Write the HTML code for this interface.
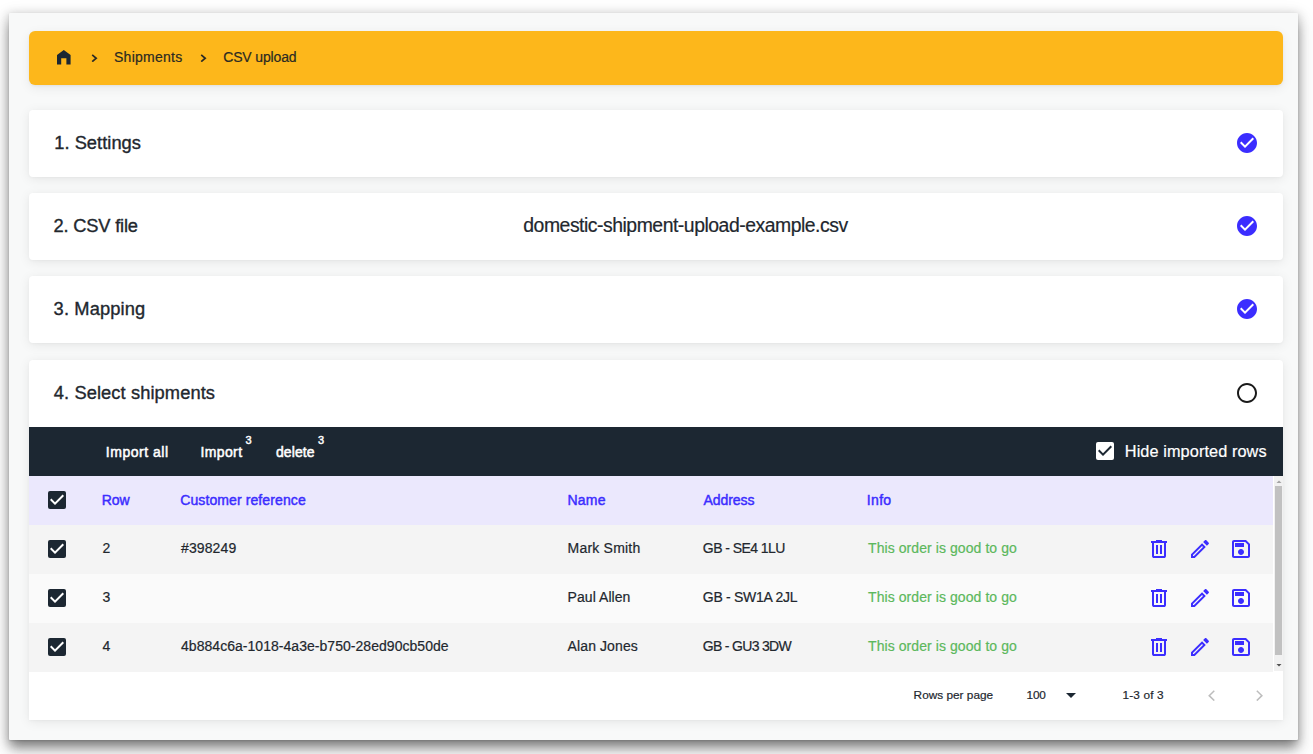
<!DOCTYPE html>
<html><head><meta charset="utf-8"><style>
html,body{margin:0;padding:0;background:#fff;width:1313px;height:754px;overflow:hidden;position:relative;font-family:"Liberation Sans",sans-serif}
.t{position:absolute;white-space:nowrap}
svg{display:block}
</style></head><body>
<div style="position:absolute;left:9px;top:13px;width:1289.3px;height:726.5px;background:#f8f9f9;border-radius:1px;box-shadow:0 1px 2px rgba(0,0,0,.12),0 2px 10px 2px rgba(0,0,0,.15),0 10px 11px -2px rgba(0,0,0,.35),0 8px 20px 3px rgba(0,0,0,.12)"></div>
<div style="position:absolute;left:29px;top:31px;width:1254px;height:53.5px;background:#fdb71b;border-radius:6px;box-shadow:0 1px 3px rgba(0,0,0,.05),0 3px 12px rgba(0,0,0,.07)"></div>
<svg style="position:absolute;left:57px;top:50.3px" width="13.6" height="14.5" viewBox="0 0 13.6 14.5"><path d="M0 14.5V4.9L6.8 0L13.6 4.9V14.5H9.4V8.2H4.2V14.5Z" fill="#1c2732"/></svg>
<svg style="position:absolute;left:90.8px;top:53.5px" width="7" height="8.5" viewBox="0 0 7 8.5"><path d="M1.2 0.9L5.2 4.25L1.2 7.6" fill="none" stroke="#2a2a25" stroke-width="1.7"/></svg>
<svg style="position:absolute;left:199.6px;top:53.5px" width="7" height="8.5" viewBox="0 0 7 8.5"><path d="M1.2 0.9L5.2 4.25L1.2 7.6" fill="none" stroke="#2a2a25" stroke-width="1.7"/></svg>
<div class="t" style="left:114.00px;top:50.05px;font-size:14px;line-height:14px;color:#2b2a22;font-weight:400;letter-spacing:0.257px;-webkit-text-stroke:0.2px #2b2a22;">Shipments</div>
<div class="t" style="left:223.20px;top:50.05px;font-size:14px;line-height:14px;color:#2b2a22;font-weight:400;letter-spacing:-0.141px;-webkit-text-stroke:0.2px #2b2a22;">CSV upload</div>
<div style="position:absolute;left:29px;top:109.5px;width:1254px;height:67px;background:#fff;border-radius:4px;box-shadow:0 1px 3px rgba(0,0,0,.03),0 2px 12px rgba(0,0,0,.08)"></div>
<div style="position:absolute;left:29px;top:192.8px;width:1254px;height:66.8px;background:#fff;border-radius:4px;box-shadow:0 1px 3px rgba(0,0,0,.03),0 2px 12px rgba(0,0,0,.08)"></div>
<div style="position:absolute;left:29px;top:276.3px;width:1254px;height:66.9px;background:#fff;border-radius:4px;box-shadow:0 1px 3px rgba(0,0,0,.03),0 2px 12px rgba(0,0,0,.08)"></div>
<div style="position:absolute;left:29px;top:360px;width:1254px;height:360px;background:#fff;border-radius:4px 4px 0 0;box-shadow:0 1px 3px rgba(0,0,0,.03),0 2px 12px rgba(0,0,0,.08)"></div>
<div class="t" style="left:54.20px;top:133.51px;font-size:18.3px;line-height:18.3px;color:#22272e;font-weight:400;letter-spacing:0.040px;-webkit-text-stroke:0.35px #22272e">1. Settings</div>
<div class="t" style="left:53.60px;top:216.81px;font-size:18.3px;line-height:18.3px;color:#22272e;font-weight:400;letter-spacing:-0.200px;-webkit-text-stroke:0.35px #22272e">2. CSV file</div>
<div class="t" style="left:53.60px;top:299.81px;font-size:18.3px;line-height:18.3px;color:#22272e;font-weight:400;letter-spacing:0.131px;-webkit-text-stroke:0.35px #22272e">3. Mapping</div>
<div class="t" style="left:53.80px;top:383.51px;font-size:18.3px;line-height:18.3px;color:#22272e;font-weight:400;letter-spacing:0.092px;-webkit-text-stroke:0.35px #22272e">4. Select shipments</div>
<div class="t" style="left:523.30px;top:215.97px;font-size:19.4px;line-height:19.4px;color:#22272e;font-weight:400;letter-spacing:-0.480px;-webkit-text-stroke:0.2px #22272e;">domestic-shipment-upload-example.csv</div>
<svg style="position:absolute;left:1235px;top:130.5px" width="24" height="24" viewBox="0 0 24 24"><path d="M12 2C6.48 2 2 6.48 2 12s4.48 10 10 10 10-4.48 10-10S17.52 2 12 2zm-2 15l-5-5 1.41-1.41L10 14.17l7.59-7.59L19 8l-9 9z" fill="#3b2dff"/></svg>
<svg style="position:absolute;left:1235px;top:213.7px" width="24" height="24" viewBox="0 0 24 24"><path d="M12 2C6.48 2 2 6.48 2 12s4.48 10 10 10 10-4.48 10-10S17.52 2 12 2zm-2 15l-5-5 1.41-1.41L10 14.17l7.59-7.59L19 8l-9 9z" fill="#3b2dff"/></svg>
<svg style="position:absolute;left:1235px;top:297.3px" width="24" height="24" viewBox="0 0 24 24"><path d="M12 2C6.48 2 2 6.48 2 12s4.48 10 10 10 10-4.48 10-10S17.52 2 12 2zm-2 15l-5-5 1.41-1.41L10 14.17l7.59-7.59L19 8l-9 9z" fill="#3b2dff"/></svg>
<svg style="position:absolute;left:1235px;top:380.5px" width="24" height="24" viewBox="0 0 24 24"><path d="M12 2C6.48 2 2 6.48 2 12s4.48 10 10 10 10-4.48 10-10S17.52 2 12 2zm0 18c-4.42 0-8-3.58-8-8s3.58-8 8-8 8 3.58 8 8-3.58 8-8 8z" fill="#1a1a1a"/></svg>
<div style="position:absolute;left:29px;top:426.7px;width:1254px;height:49px;background:#1c2732"></div>
<div class="t" style="left:105.80px;top:445.05px;font-size:14px;line-height:14px;color:#fff;font-weight:400;letter-spacing:0.525px;-webkit-text-stroke:0.5px #fff">Import all</div>
<div class="t" style="left:200.40px;top:445.05px;font-size:14px;line-height:14px;color:#fff;font-weight:400;letter-spacing:0.400px;-webkit-text-stroke:0.5px #fff">Import</div>
<div class="t" style="left:245.60px;top:434.61px;font-size:10.5px;line-height:10.5px;color:#fff;font-weight:400;-webkit-text-stroke:0.45px #fff;font-size:11px">3</div>
<div class="t" style="left:276.00px;top:445.05px;font-size:14px;line-height:14px;color:#fff;font-weight:400;letter-spacing:0.080px;-webkit-text-stroke:0.5px #fff">delete</div>
<div class="t" style="left:317.90px;top:434.61px;font-size:10.5px;line-height:10.5px;color:#fff;font-weight:400;-webkit-text-stroke:0.45px #fff;font-size:11px">3</div>
<svg style="position:absolute;left:1092.5px;top:439.3px" width="24" height="24" viewBox="0 0 24 24"><rect x="3" y="3" width="18" height="18" rx="2" fill="#fff"/><path d="M10 17l-5-5 1.41-1.41L10 14.17l7.59-7.59L19 8l-9 9z" fill="#1c2732"/></svg>
<div class="t" style="left:1124.80px;top:443.30px;font-size:16.3px;line-height:16.3px;color:#fff;font-weight:400;letter-spacing:0.091px;-webkit-text-stroke:0.2px #fff;">Hide imported rows</div>
<div style="position:absolute;left:29px;top:475.7px;width:1244px;height:49px;background:#ebe8fd"></div>
<svg style="position:absolute;left:45.3px;top:488px" width="24" height="24" viewBox="0 0 24 24"><rect x="3" y="3" width="18" height="18" rx="2" fill="#1c2732"/><path d="M10 17l-5-5 1.41-1.41L10 14.17l7.59-7.59L19 8l-9 9z" fill="#fff"/></svg>
<div class="t" style="left:101.80px;top:492.55px;font-size:14px;line-height:14px;color:#3b2dff;font-weight:400;letter-spacing:-0.150px;-webkit-text-stroke:0.45px #3b2dff">Row</div>
<div class="t" style="left:180.20px;top:492.55px;font-size:14px;line-height:14px;color:#3b2dff;font-weight:400;letter-spacing:0.104px;-webkit-text-stroke:0.45px #3b2dff">Customer reference</div>
<div class="t" style="left:567.60px;top:492.55px;font-size:14px;line-height:14px;color:#3b2dff;font-weight:400;letter-spacing:0.168px;-webkit-text-stroke:0.45px #3b2dff">Name</div>
<div class="t" style="left:703.40px;top:492.55px;font-size:14px;line-height:14px;color:#3b2dff;font-weight:400;letter-spacing:-0.031px;-webkit-text-stroke:0.45px #3b2dff">Address</div>
<div class="t" style="left:866.80px;top:492.55px;font-size:14px;line-height:14px;color:#3b2dff;font-weight:400;letter-spacing:0.333px;-webkit-text-stroke:0.45px #3b2dff">Info</div>
<div style="position:absolute;left:29px;top:524.7px;width:1244px;height:49px;background:#f4f4f4"></div>
<svg style="position:absolute;left:45.3px;top:537.0px" width="24" height="24" viewBox="0 0 24 24"><rect x="3" y="3" width="18" height="18" rx="2" fill="#1c2732"/><path d="M10 17l-5-5 1.41-1.41L10 14.17l7.59-7.59L19 8l-9 9z" fill="#fff"/></svg>
<div class="t" style="left:102.60px;top:541.05px;font-size:14px;line-height:14px;color:#22272e;font-weight:400;-webkit-text-stroke:0.2px #22272e;">2</div>
<div class="t" style="left:181.00px;top:541.05px;font-size:14px;line-height:14px;color:#22272e;font-weight:400;letter-spacing:0.118px;-webkit-text-stroke:0.2px #22272e;">#398249</div>
<div class="t" style="left:567.60px;top:541.05px;font-size:14px;line-height:14px;color:#22272e;font-weight:400;letter-spacing:0.202px;-webkit-text-stroke:0.2px #22272e;">Mark Smith</div>
<div class="t" style="left:702.80px;top:541.05px;font-size:14px;line-height:14px;color:#22272e;font-weight:400;letter-spacing:-0.554px;-webkit-text-stroke:0.2px #22272e;">GB - SE4 1LU</div>
<div class="t" style="left:868.00px;top:541.05px;font-size:14px;line-height:14px;color:#5cb85c;font-weight:400;letter-spacing:0.077px;-webkit-text-stroke:0.2px #5cb85c;">This order is good to go</div>
<svg style="position:absolute;left:1147px;top:536.9000000000001px" width="24" height="24" viewBox="0 -960 960 960"><path d="M280-120q-33 0-56.5-23.5T200-200v-520h-40v-80h200v-40h240v40h200v80h-40v520q0 33-23.5 56.5T680-120H280Zm400-600H280v520h400v-520ZM360-280h80v-360h-80v360Zm160 0h80v-360h-80v360Z" fill="#3b2dff"/></svg>
<svg style="position:absolute;left:1188px;top:536.9000000000001px" width="24" height="24" viewBox="0 0 24 24"><path d="M3 17.25V21h3.75L17.81 9.94l-3.75-3.75L3 17.25zM5.92 19H5v-.92l9.06-9.06.92.92L5.92 19zM20.71 5.63l-2.34-2.34c-.2-.2-.45-.29-.71-.29s-.51.1-.7.29l-1.83 1.83 3.75 3.75 1.83-1.83c.39-.39.39-1.02 0-1.41z" fill="#3b2dff"/></svg>
<svg style="position:absolute;left:1229px;top:536.9000000000001px" width="24" height="24" viewBox="0 0 24 24"><path d="M17 3H5c-1.11 0-2 .9-2 2v14c0 1.1.89 2 2 2h14c1.1 0 2-.9 2-2V7l-4-4zm2 16H5V5h11.17L19 7.83V19zm-7-7c-1.66 0-3 1.34-3 3s1.34 3 3 3 3-1.34 3-3-1.34-3-3-3zM6 6h9v4H6z" fill="#3b2dff"/></svg>
<div style="position:absolute;left:29px;top:573.7px;width:1244px;height:49px;background:#fafafa"></div>
<svg style="position:absolute;left:45.3px;top:586.0px" width="24" height="24" viewBox="0 0 24 24"><rect x="3" y="3" width="18" height="18" rx="2" fill="#1c2732"/><path d="M10 17l-5-5 1.41-1.41L10 14.17l7.59-7.59L19 8l-9 9z" fill="#fff"/></svg>
<div class="t" style="left:102.60px;top:590.05px;font-size:14px;line-height:14px;color:#22272e;font-weight:400;-webkit-text-stroke:0.2px #22272e;">3</div>
<div class="t" style="left:567.60px;top:590.05px;font-size:14px;line-height:14px;color:#22272e;font-weight:400;letter-spacing:0.056px;-webkit-text-stroke:0.2px #22272e;">Paul Allen</div>
<div class="t" style="left:702.80px;top:590.05px;font-size:14px;line-height:14px;color:#22272e;font-weight:400;letter-spacing:-0.281px;-webkit-text-stroke:0.2px #22272e;">GB - SW1A 2JL</div>
<div class="t" style="left:868.00px;top:590.05px;font-size:14px;line-height:14px;color:#5cb85c;font-weight:400;letter-spacing:0.077px;-webkit-text-stroke:0.2px #5cb85c;">This order is good to go</div>
<svg style="position:absolute;left:1147px;top:585.9000000000001px" width="24" height="24" viewBox="0 -960 960 960"><path d="M280-120q-33 0-56.5-23.5T200-200v-520h-40v-80h200v-40h240v40h200v80h-40v520q0 33-23.5 56.5T680-120H280Zm400-600H280v520h400v-520ZM360-280h80v-360h-80v360Zm160 0h80v-360h-80v360Z" fill="#3b2dff"/></svg>
<svg style="position:absolute;left:1188px;top:585.9000000000001px" width="24" height="24" viewBox="0 0 24 24"><path d="M3 17.25V21h3.75L17.81 9.94l-3.75-3.75L3 17.25zM5.92 19H5v-.92l9.06-9.06.92.92L5.92 19zM20.71 5.63l-2.34-2.34c-.2-.2-.45-.29-.71-.29s-.51.1-.7.29l-1.83 1.83 3.75 3.75 1.83-1.83c.39-.39.39-1.02 0-1.41z" fill="#3b2dff"/></svg>
<svg style="position:absolute;left:1229px;top:585.9000000000001px" width="24" height="24" viewBox="0 0 24 24"><path d="M17 3H5c-1.11 0-2 .9-2 2v14c0 1.1.89 2 2 2h14c1.1 0 2-.9 2-2V7l-4-4zm2 16H5V5h11.17L19 7.83V19zm-7-7c-1.66 0-3 1.34-3 3s1.34 3 3 3 3-1.34 3-3-1.34-3-3-3zM6 6h9v4H6z" fill="#3b2dff"/></svg>
<div style="position:absolute;left:29px;top:622.7px;width:1244px;height:49px;background:#f4f4f4"></div>
<svg style="position:absolute;left:45.3px;top:635.0px" width="24" height="24" viewBox="0 0 24 24"><rect x="3" y="3" width="18" height="18" rx="2" fill="#1c2732"/><path d="M10 17l-5-5 1.41-1.41L10 14.17l7.59-7.59L19 8l-9 9z" fill="#fff"/></svg>
<div class="t" style="left:102.60px;top:639.05px;font-size:14px;line-height:14px;color:#22272e;font-weight:400;-webkit-text-stroke:0.2px #22272e;">4</div>
<div class="t" style="left:181.00px;top:639.05px;font-size:14px;line-height:14px;color:#22272e;font-weight:400;letter-spacing:0.039px;-webkit-text-stroke:0.2px #22272e;">4b884c6a-1018-4a3e-b750-28ed90cb50de</div>
<div class="t" style="left:567.60px;top:639.05px;font-size:14px;line-height:14px;color:#22272e;font-weight:400;letter-spacing:0.101px;-webkit-text-stroke:0.2px #22272e;">Alan Jones</div>
<div class="t" style="left:702.80px;top:639.05px;font-size:14px;line-height:14px;color:#22272e;font-weight:400;letter-spacing:-0.682px;-webkit-text-stroke:0.2px #22272e;">GB - GU3 3DW</div>
<div class="t" style="left:868.00px;top:639.05px;font-size:14px;line-height:14px;color:#5cb85c;font-weight:400;letter-spacing:0.077px;-webkit-text-stroke:0.2px #5cb85c;">This order is good to go</div>
<svg style="position:absolute;left:1147px;top:634.9000000000001px" width="24" height="24" viewBox="0 -960 960 960"><path d="M280-120q-33 0-56.5-23.5T200-200v-520h-40v-80h200v-40h240v40h200v80h-40v520q0 33-23.5 56.5T680-120H280Zm400-600H280v520h400v-520ZM360-280h80v-360h-80v360Zm160 0h80v-360h-80v360Z" fill="#3b2dff"/></svg>
<svg style="position:absolute;left:1188px;top:634.9000000000001px" width="24" height="24" viewBox="0 0 24 24"><path d="M3 17.25V21h3.75L17.81 9.94l-3.75-3.75L3 17.25zM5.92 19H5v-.92l9.06-9.06.92.92L5.92 19zM20.71 5.63l-2.34-2.34c-.2-.2-.45-.29-.71-.29s-.51.1-.7.29l-1.83 1.83 3.75 3.75 1.83-1.83c.39-.39.39-1.02 0-1.41z" fill="#3b2dff"/></svg>
<svg style="position:absolute;left:1229px;top:634.9000000000001px" width="24" height="24" viewBox="0 0 24 24"><path d="M17 3H5c-1.11 0-2 .9-2 2v14c0 1.1.89 2 2 2h14c1.1 0 2-.9 2-2V7l-4-4zm2 16H5V5h11.17L19 7.83V19zm-7-7c-1.66 0-3 1.34-3 3s1.34 3 3 3 3-1.34 3-3-1.34-3-3-3zM6 6h9v4H6z" fill="#3b2dff"/></svg>
<div style="position:absolute;left:1273.5px;top:475.7px;width:9.8px;height:195.8px;background:#f1f1f1"></div>
<div style="position:absolute;left:1275px;top:486.3px;width:7px;height:168.6px;background:#c1c1c1"></div>
<svg style="position:absolute;left:1275.5px;top:480px" width="6" height="3" viewBox="0 0 6 3"><path d="M0.5 3L3 0.5L5.5 3Z" fill="#a3a3a3"/></svg>
<svg style="position:absolute;left:1275.5px;top:664.3px" width="6" height="3" viewBox="0 0 6 3"><path d="M0.5 0L3 2.5L5.5 0Z" fill="#505050"/></svg>
<div style="position:absolute;left:29px;top:671.5px;width:1254px;height:48.5px;background:#fff"></div>
<div class="t" style="left:913.60px;top:689.91px;font-size:11.8px;line-height:11.8px;color:#22272e;font-weight:400;letter-spacing:0.019px;-webkit-text-stroke:0.2px #22272e;">Rows per page</div>
<div class="t" style="left:1026.60px;top:690.01px;font-size:11.8px;line-height:11.8px;color:#22272e;font-weight:400;letter-spacing:-0.250px;-webkit-text-stroke:0.2px #22272e;">100</div>
<svg style="position:absolute;left:1066.3px;top:693px" width="10" height="5" viewBox="0 0 10 5"><path d="M0 0H10L5 5Z" fill="#1c2732"/></svg>
<div class="t" style="left:1122.60px;top:690.01px;font-size:11.8px;line-height:11.8px;color:#22272e;font-weight:400;letter-spacing:0.132px;-webkit-text-stroke:0.2px #22272e;">1-3 of 3</div>
<svg style="position:absolute;left:1208.4px;top:689.7px" width="7.1" height="11.3" viewBox="0 0 7.1 11.3"><path d="M6.3 0.7L1.2 5.65L6.3 10.6" fill="none" stroke="#bdbdbd" stroke-width="1.5"/></svg>
<svg style="position:absolute;left:1255.7px;top:689.7px" width="7.1" height="11.3" viewBox="0 0 7.1 11.3"><path d="M0.8 0.7L5.9 5.65L0.8 10.6" fill="none" stroke="#bdbdbd" stroke-width="1.5"/></svg>
</body></html>
